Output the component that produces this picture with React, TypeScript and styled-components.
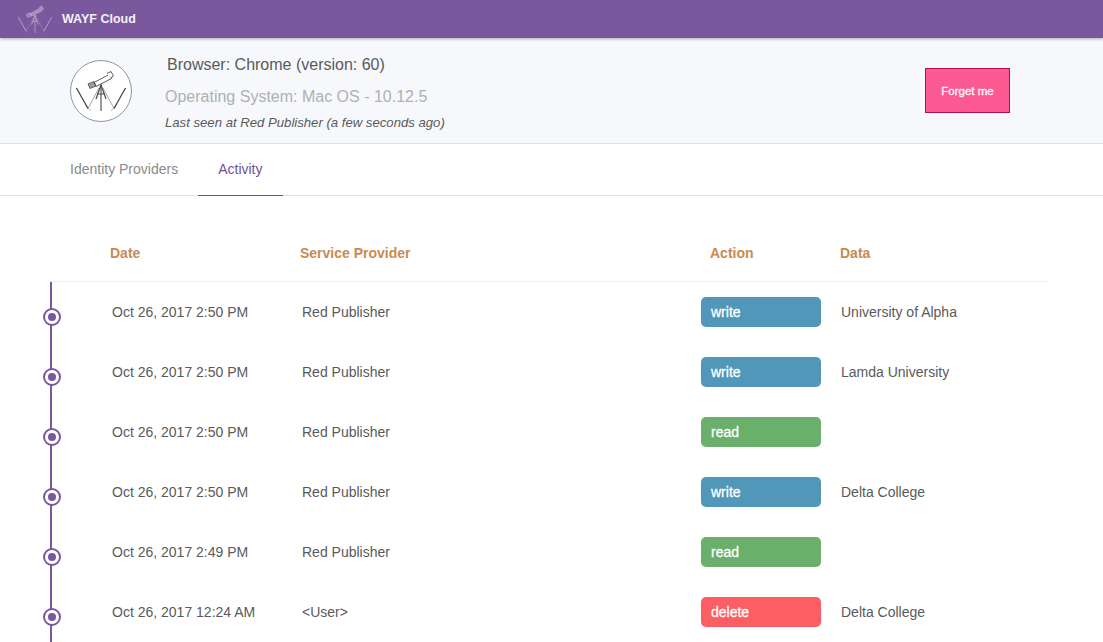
import React from "react"
import styled, { createGlobalStyle } from "styled-components"

const GlobalStyle = createGlobalStyle`
  html, body {
    margin: 0;
    padding: 0;
    height: 642px;
    overflow: hidden;
    background: #fff;
    font-family: "Liberation Sans", Arial, sans-serif;
    color: #5a5a5a;
  }
`

const ACTION_COLORS = {
  write: "#5097b9",
  read: "#6aaf6c",
  delete: "#fd5e63",
}

type ActionType = keyof typeof ACTION_COLORS

const ACTIVITY: { date: string; provider: string; action: ActionType; data: string }[] = [
  { date: "Oct 26, 2017 2:50 PM", provider: "Red Publisher", action: "write", data: "University of Alpha" },
  { date: "Oct 26, 2017 2:50 PM", provider: "Red Publisher", action: "write", data: "Lamda University" },
  { date: "Oct 26, 2017 2:50 PM", provider: "Red Publisher", action: "read", data: "" },
  { date: "Oct 26, 2017 2:50 PM", provider: "Red Publisher", action: "write", data: "Delta College" },
  { date: "Oct 26, 2017 2:49 PM", provider: "Red Publisher", action: "read", data: "" },
  { date: "Oct 26, 2017 12:24 AM", provider: "<User>", action: "delete", data: "Delta College" },
]

const Telescope = ({ width, stroke, tube, opacity = 1 }: { width: number; stroke: string; tube: string; opacity?: number }) => (
  <svg width={width} height={(width * 42) / 50} viewBox="0 0 50 42" fill="none" stroke={stroke} opacity={opacity}>
    {/* tube, eyepiece */}
    <path d="M18 12.5 L33 4.5 L35.5 8.5 L20 16.5 Z" fill={tube} strokeWidth="0.9" />
    <path d="M31 3.5 L35 1.5 L37.5 6 L34.5 8" fill={tube} strokeWidth="0.9" />
    <path d="M12 14 L18 11.5 L20 16 L14 18.5 Z" fill={stroke} fillOpacity="0.55" strokeWidth="0.8" />
    {/* tripod */}
    <path d="M25 14 L25 41" strokeWidth="1.1" />
    <path d="M25 15 L20 29 M25 15 L30 29 M21 24 L29 24" strokeWidth="1.2" />
    {/* the W */}
    <path d="M0.5 18 L12 38.5" strokeWidth="1.3" />
    <path d="M12 38.5 L23 18" strokeWidth="0.7" opacity="0.7" />
    <path d="M27 18 L38 38.5" strokeWidth="0.7" opacity="0.7" />
    <path d="M38 38.5 L49.5 18" strokeWidth="1.3" />
    <path d="M9 34.5 L15 41 M41 34.5 L35 41" strokeWidth="0.6" opacity="0.6" />
  </svg>
)

export default function App() {
  return (
    <Page>
      <GlobalStyle />
      <TopBar>
        <TopBarLogo>
          <Telescope width={34} stroke="#d6cbe2" tube="#b7a6cb" opacity={0.7} />
        </TopBarLogo>
        <Brand>WAYF Cloud</Brand>
      </TopBar>
      <DeviceHeader>
        <Avatar>
          <Telescope width={50} stroke="#4a4a4a" tube="#fff" />
        </Avatar>
        <DeviceInfo>
          <BrowserLine>Browser: Chrome (version: 60)</BrowserLine>
          <OsLine>Operating System: Mac OS - 10.12.5</OsLine>
          <LastSeen>Last seen at Red Publisher (a few seconds ago)</LastSeen>
        </DeviceInfo>
        <ForgetButton>Forget me</ForgetButton>
      </DeviceHeader>
      <Tabs>
        <Tab>Identity Providers</Tab>
        <Tab $active>Activity</Tab>
      </Tabs>
      <Content>
        <HeadRow>
          <HeadCell>Date</HeadCell>
          <HeadCell>Service Provider</HeadCell>
          <HeadCell>Action</HeadCell>
          <HeadCell>Data</HeadCell>
        </HeadRow>
        <Timeline>
          {ACTIVITY.map((item, i) => (
            <Row key={i}>
              <Marker />
              <Cell>{item.date}</Cell>
              <Cell>{item.provider}</Cell>
              <div>
                <ActionPill $action={item.action}>{item.action}</ActionPill>
              </div>
              <Cell>{item.data}</Cell>
            </Row>
          ))}
        </Timeline>
      </Content>
    </Page>
  )
}

const Page = styled.div`
  width: 1103px;
  height: 642px;
  overflow: hidden;
`

const TopBar = styled.header`
  position: relative;
  display: flex;
  align-items: center;
  height: 38px;
  background: #7a589e;
  box-shadow: 0 1px 3px rgba(0, 0, 0, 0.3);
`

const TopBarLogo = styled.div`
  display: flex;
  width: 34px;
  margin-left: 18px;
`

const Brand = styled.span`
  margin-left: 10px;
  font-size: 12.5px;
  font-weight: 700;
  color: #f4f0f8;
`

const DeviceHeader = styled.section`
  display: flex;
  align-items: flex-start;
  height: 106px;
  box-sizing: border-box;
  padding: 0 93px 0 70px;
  background: #f6f8fc;
  border-bottom: 1px solid #e0e1e4;
`

const Avatar = styled.div`
  display: flex;
  align-items: center;
  justify-content: center;
  flex: none;
  width: 60px;
  height: 60px;
  margin-top: 22px;
  border: 1px solid #8a95ab;
  border-radius: 50%;
  background: #fff;
`

const DeviceInfo = styled.div`
  flex: 1;
  margin-left: 33px;
  padding-top: 18px;
`

const BrowserLine = styled.div`
  margin-left: 2px;
  font-size: 16px;
  line-height: 18px;
  color: #5a5a5a;
`

const OsLine = styled.div`
  margin-top: 14px;
  font-size: 16px;
  line-height: 18px;
  color: #b0b0b0;
`

const LastSeen = styled.div`
  margin-top: 9px;
  font-size: 13.15px;
  line-height: 15px;
  font-style: italic;
  color: #5a5a5a;
`

const ForgetButton = styled.button`
  width: 85px;
  height: 45px;
  margin-top: 30px;
  padding: 0;
  border: 1px solid #b8104f;
  background: #fd5a94;
  color: #fff;
  font-family: inherit;
  font-size: 11.5px;
  -webkit-text-stroke: 0.3px #fff;
`

const Tabs = styled.nav`
  display: flex;
  height: 52px;
  box-sizing: border-box;
  padding-left: 50px;
  border-bottom: 1px solid #e0e1e4;
`

const Tab = styled.div<{ $active?: boolean }>`
  display: flex;
  align-items: center;
  justify-content: center;
  box-sizing: border-box;
  height: 52px;
  padding: 0 20px 2px;
  font-size: 14px;
  color: ${p => (p.$active ? "#6f4f95" : "#8b8b8b")};
  border-bottom: 1px solid ${p => (p.$active ? "#6f4f95" : "transparent")};
`

const Content = styled.main`
  margin: 0 55px 0 50px;
`

const HeadRow = styled.div`
  display: grid;
  grid-template-columns: 190px 410px 130px 1fr;
  align-items: center;
  height: 86px;
  box-sizing: border-box;
  padding: 28px 0 0 60px;
  border-bottom: 1px solid #f0f0f0;
`

const HeadCell = styled.div`
  font-size: 14px;
  font-weight: 700;
  color: #c98a52;
`

const Timeline = styled.div`
  border-left: 2px solid #7a589e;
`

const Row = styled.div`
  position: relative;
  display: grid;
  grid-template-columns: 190px 399px 140px 1fr;
  align-items: center;
  height: 60px;
  padding-left: 60px;
  font-size: 14px;
`

const Marker = styled.span`
  position: absolute;
  left: -9px;
  top: 26px;
  box-sizing: border-box;
  width: 18px;
  height: 18px;
  border: 2px solid #7a589e;
  border-radius: 50%;
  background: #fff;

  &::after {
    content: "";
    position: absolute;
    left: 3px;
    top: 3px;
    width: 8px;
    height: 8px;
    border-radius: 50%;
    background: #7a589e;
  }
`

const Cell = styled.div`
  color: #5a5a5a;
  line-height: 17px;
`

const ActionPill = styled.div<{ $action: ActionType }>`
  box-sizing: border-box;
  width: 120px;
  height: 30px;
  padding-left: 10px;
  border-radius: 5px;
  background: ${p => ACTION_COLORS[p.$action]};
  color: #fff;
  font-size: 14px;
  -webkit-text-stroke: 0.3px #fff;
  line-height: 30px;
`
